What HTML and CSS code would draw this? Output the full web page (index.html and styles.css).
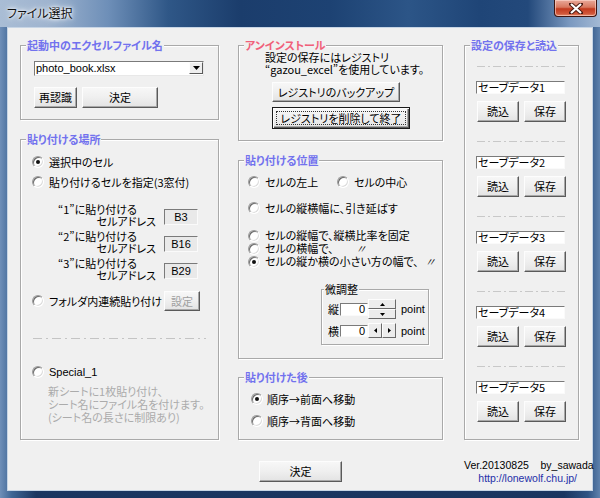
FILE: index.html
```html
<!DOCTYPE html>
<html lang="ja">
<head>
<meta charset="utf-8">
<title>ファイル選択</title>
<link rel="stylesheet" href="styles.css">
</head>
<body>
<div class="window">
  <div class="titlebar">
    <span class="title">ファイル選択</span>
    <div class="close">
      <svg width="14" height="11" viewBox="0 0 14 11"><path d="M2 1 L12 10 M12 1 L2 10" stroke="#4a1a12" stroke-width="4" stroke-linecap="square"/><path d="M2 1 L12 10 M12 1 L2 10" stroke="#fff" stroke-width="2.2"/></svg>
    </div>
  </div>
  <div class="client">
    <div class="col col-left">
      <section class="group g-file">
        <div class="gtitle">起動中のエクセルファイル名</div>
        <div class="combo">
          <span class="combo-text">photo_book.xlsx</span>
          <span class="combo-btn"><svg width="7" height="4" viewBox="0 0 7 4"><path d="M0 0 H7 L3.5 4 Z" fill="#000"/></svg></span>
        </div>
        <div class="btnrow">
          <div class="btn b-rerec">再認識</div>
          <div class="btn b-ok1">決定</div>
        </div>
      </section>
      <section class="group g-place">
        <div class="gtitle">貼り付ける場所</div>
        <div class="radio-row r-first"><span class="radio checked"></span><span>選択中のセル</span></div>
        <div class="radio-row r-second"><span class="radio"></span><span>貼り付けるセルを指定(3窓付)</span></div>
        <div class="addr a-first">
          <div class="addr-label"><div>“1”に貼り付ける</div><div class="al2">セルアドレス</div></div>
          <div class="addr-box">B3</div>
        </div>
        <div class="addr">
          <div class="addr-label"><div>“2”に貼り付ける</div><div class="al2">セルアドレス</div></div>
          <div class="addr-box">B16</div>
        </div>
        <div class="addr">
          <div class="addr-label"><div>“3”に貼り付ける</div><div class="al2">セルアドレス</div></div>
          <div class="addr-box">B29</div>
        </div>
        <div class="folder-row">
          <div class="radio-row"><span class="radio"></span><span>フォルダ内連続貼り付け</span></div>
          <div class="btn disabled b-set">設定</div>
        </div>
        <div class="dash dash-left"></div>
        <div class="radio-row r-special"><span class="radio"></span><span class="latin">Special_1</span></div>
        <div class="desc">新シートに1枚貼り付け、<br>シート名にファイル名を付けます。<br>(シート名の長さに制限あり)</div>
      </section>
    </div>

    <div class="col col-mid">
      <section class="group g-uninst">
        <div class="gtitle pink">アンインストール</div>
        <div class="uninst-text">設定の保存にはレジストリ<br>“gazou_excel”を使用しています。</div>
        <div class="btn b-backup">レジストリのバックアップ</div>
        <div class="btn focused b-delete"><span class="focus-rect">レジストリを削除して終了</span></div>
      </section>
      <section class="group g-pos">
        <div class="gtitle">貼り付ける位置</div>
        <div class="pos-row1">
          <div class="radio-row pr-a"><span class="radio"></span><span>セルの左上</span></div>
          <div class="radio-row"><span class="radio"></span><span>セルの中心</span></div>
        </div>
        <div class="radio-row pos-row2"><span class="radio"></span><span>セルの縦横幅に、引き延ばす</span></div>
        <div class="radio-row pos-row3 tight"><span class="radio"></span><span>セルの縦幅で、縦横比率を固定</span></div>
        <div class="radio-row pos-row tight"><span class="radio"></span><span>セルの横幅で、</span><span class="ditto d1">〃</span></div>
        <div class="radio-row pos-row tight"><span class="radio checked"></span><span>セルの縦か横の小さい方の幅で、</span><span class="ditto d2">〃</span></div>
        <section class="group g-fine">
          <div class="gtitle plain">微調整</div>
          <div class="fine-row fr1">
            <span class="fine-lbl">縦</span>
            <span class="num">0</span>
            <span class="spin-v">
              <span class="sbtn"><svg width="5" height="3" viewBox="0 0 5 3"><path d="M0 3 H5 L2.5 0 Z" fill="#000"/></svg></span>
              <span class="sbtn"><svg width="5" height="3" viewBox="0 0 5 3"><path d="M0 0 H5 L2.5 3 Z" fill="#000"/></svg></span>
            </span>
            <span class="latin pt">point</span>
          </div>
          <div class="fine-row fr2">
            <span class="fine-lbl">横</span>
            <span class="num">0</span>
            <span class="spin-h">
              <span class="sbtn"><svg width="3" height="5" viewBox="0 0 3 5"><path d="M3 0 V5 L0 2.5 Z" fill="#000"/></svg></span>
              <span class="sbtn"><svg width="3" height="5" viewBox="0 0 3 5"><path d="M0 0 V5 L3 2.5 Z" fill="#000"/></svg></span>
            </span>
            <span class="latin pt">point</span>
          </div>
        </section>
      </section>
      <section class="group g-after">
        <div class="gtitle">貼り付けた後</div>
        <div class="radio-row af1"><span class="radio checked"></span><span>順序→前面へ移動</span></div>
        <div class="radio-row af2"><span class="radio"></span><span>順序→背面へ移動</span></div>
      </section>
      <div class="btn b-ok2">決定</div>
    </div>

    <div class="col col-right">
      <section class="group g-save">
        <div class="gtitle">設定の保存と読込</div>
        <div class="dash dash-right first"></div>
        <div class="tbox">セーブデータ1</div>
        <div class="btnrow2"><div class="btn sbt">読込</div><div class="btn sbt">保存</div></div>
        <div class="dash dash-right"></div>
        <div class="tbox">セーブデータ2</div>
        <div class="btnrow2"><div class="btn sbt">読込</div><div class="btn sbt">保存</div></div>
        <div class="dash dash-right"></div>
        <div class="tbox">セーブデータ3</div>
        <div class="btnrow2"><div class="btn sbt">読込</div><div class="btn sbt">保存</div></div>
        <div class="dash dash-right"></div>
        <div class="tbox">セーブデータ4</div>
        <div class="btnrow2"><div class="btn sbt">読込</div><div class="btn sbt">保存</div></div>
        <div class="dash dash-right"></div>
        <div class="tbox">セーブデータ5</div>
        <div class="btnrow2"><div class="btn sbt">読込</div><div class="btn sbt">保存</div></div>
      </section>
      <div class="version">
        <div>Ver.20130825&nbsp;&nbsp;&nbsp;&nbsp;by_sawada</div>
        <div class="link">http://lonewolf.chu.jp/</div>
      </div>
    </div>
  </div>
</div>
</body>
</html>
```

FILE: styles.css
```css
* { box-sizing: border-box; }

html, body { margin: 0; padding: 0; }

body {
  font-family: "Noto Sans CJK JP", "Noto Sans", sans-serif;
  font-size: 11px;
  color: #000;
  font-feature-settings: "palt";
  background: #1c3a64;
}

.window {
  width: 600px;
  height: 498px;
  padding: 0 7px 7px;
  display: flex;
  flex-direction: column;
  background:
    linear-gradient(90deg, #6f8fb8 0%, #3e6594 2%, rgba(40,75,120,0) 6%, rgba(40,75,120,0) 94%, #2f5484 98%, #5f82ad 100%),
    linear-gradient(180deg, #2d5283 0%, #3a6190 40%, #2a4c7a 80%, #1a3560 100%);
}

.titlebar {
  height: 27px;
  margin: 0 -7px;
  padding: 0 7px;
  display: flex;
  justify-content: space-between;
  align-items: flex-start;
  background: linear-gradient(90deg, #a9bdd5 0%, #9fb4cf 8%, #6e8fb8 18%, #2f5787 28%, #1b3d6c 40%, #1d4273 55%, #2c5587 68%, #1f4577 80%, #23497b 88%, #7b99c0 95%, #a3b9d4 100%);
}

.title {
  margin-top: 5px;
  line-height: 16px;
  font-size: 12px;
  color: #111;
  text-shadow: 0 0 5px #fff, 0 0 3px #fff, 0 0 8px #e8f0fa;
}

.close {
  width: 43px;
  height: 17px;
  margin-right: -4px;
  border: 1px solid #3d1410;
  border-top: none;
  border-radius: 0 0 4px 4px;
  background: linear-gradient(180deg, #e9a99a 0%, #d8785f 45%, #c23a1e 55%, #d0573a 85%, #e38a6a 100%);
  box-shadow: inset 0 0 0 1px rgba(255,220,210,0.6);
  display: flex;
  align-items: center;
  justify-content: center;
}

.client {
  flex: 1;
  border: 1px solid #c7d5e5;
  background: #f0f0f0;
  display: flex;
  padding-left: 12px;
}

.col { display: flex; flex-direction: column; align-items: flex-start; }
.col-left { width: 199px; }
.col-mid { width: 205px; margin-left: 19px; }
.col-right { width: 115px; margin-left: 21px; }

/* group boxes */
.group {
  border: 1px solid #a9a9a9;
  box-shadow: 1px 1px 0 #fff, inset 1px 1px 0 #fff;
  display: flex;
  flex-direction: column;
  align-items: flex-start;
  width: 100%;
}

.gtitle {
  margin: -7px 0 -6px 5px;
  padding: 0 1px;
  height: 13px;
  line-height: 13px;
  background: #f0f0f0;
  color: #7272ee;
  font-weight: bold;
  white-space: nowrap;
}
.gtitle.pink { color: #f0607a; }
.gtitle.plain { color: #000; font-weight: normal; margin-left: 2px; }

.latin { font-family: "Liberation Sans", sans-serif; font-size: 11px; }

/* buttons */
.btn {
  display: flex;
  align-items: center;
  justify-content: center;
  height: 21px;
  border: 1px solid;
  border-color: #fdfdfd #5a5a5a #5a5a5a #fdfdfd;
  box-shadow: inset -1px -1px 0 #a8a8a8;
  background: linear-gradient(180deg, #f7f7f7 0%, #efefef 50%, #e3e3e3 100%);
  line-height: 13px;
  white-space: nowrap;
}
.btn.disabled { color: #a0a0a0; }

/* radio */
.radio-row {
  display: flex;
  align-items: center;
  height: 14px;
  line-height: 14px;
  white-space: nowrap;
}
.radio {
  width: 12px;
  height: 12px;
  border-radius: 50%;
  border: 1px solid;
  border-color: #9a9a9a #ffffff #ffffff #9a9a9a;
  background: #fff;
  box-shadow: inset 1px 1px 0 #6a6a6a, inset -1px -1px 0 #dcdcdc;
  margin-right: 5px;
  flex: none;
  display: flex;
  align-items: center;
  justify-content: center;
}
.radio.checked::after {
  content: "";
  width: 4px;
  height: 4px;
  border-radius: 50%;
  background: #111;
}

/* group 1 */
.g-file { margin-top: 17px; height: 75px; }
.combo {
  margin: 15px 0 0 13px;
  width: 170px;
  height: 15px;
  display: flex;
  justify-content: space-between;
  background: #fff;
  border: 1px solid;
  border-color: #7a7a7a #e8e8e8 #e8e8e8 #7a7a7a;
}
.combo-text {
  font-family: "Liberation Sans", sans-serif;
  font-size: 11px;
  line-height: 13px;
  padding-left: 1px;
}
.combo-btn {
  width: 14px;
  height: 12px;
  margin-right: 0;
  border: 1px solid;
  border-color: #fdfdfd #5a5a5a #5a5a5a #fdfdfd;
  background: #eeeeee;
  display: flex;
  align-items: center;
  justify-content: center;
}
.btnrow { margin: 11px 0 0 13px; display: flex; gap: 5px; }
.b-rerec { width: 43px; }
.b-ok1 { width: 76px; }

/* group 2 */
.g-place { margin-top: 19px; height: 301px; }
.g-place .radio-row { margin-left: 11px; }
.r-first { margin-top: 15px; }
.r-second { margin-top: 6px; }
.addr {
  display: flex;
  align-items: flex-end;
  margin: 3px 0 0 37px;
  height: 24px;
}
.addr.a-first { margin-top: 14px; }
.addr-label { width: 98px; line-height: 12px; white-space: nowrap; }
.addr-label .al2 { text-align: right; }
.addr-box {
  margin: 0 0 2px 8px;
  width: 34px;
  height: 16px;
  border: 1px solid;
  border-color: #7a7a7a #fafafa #fafafa #7a7a7a;
  background: #e9e9e9;
  font-family: "Liberation Sans", sans-serif;
  font-size: 11px;
  line-height: 14px;
  text-align: center;
}
.folder-row {
  align-self: stretch;
  display: flex;
  align-items: center;
  margin-top: 10px;
  height: 20px;
}
.b-set { width: 36px; height: 20px; margin-left: auto; margin-right: 18px; }
.dash { height: 1px; }
.dash-left {
  margin: 27px 0 0 12px;
  width: 173px;
  background: repeating-linear-gradient(90deg, #c4c4c4 0 9px, transparent 9px 13px, #c4c4c4 13px 15px, transparent 15px 19px);
}
.r-special { margin-top: 26px; }
.desc {
  margin: 6px 0 0 27px;
  line-height: 13px;
  color: #ababab;
  white-space: nowrap;
}

/* group 3 */
.g-uninst { margin-top: 17px; height: 96px; }
.uninst-text { margin: 5px 0 0 26px; line-height: 12px; white-space: nowrap; }
.b-backup { margin: 7px 0 0 33px; width: 128px; height: 20px; }
.b-delete {
  margin: 5px 0 0 33px;
  width: 138px;
  height: 22px;
  border: 1px solid #1a1a1a;
  box-shadow: inset 1px 1px 0 #fdfdfd, inset -1px -1px 0 #5a5a5a, inset -2px -2px 0 #a8a8a8;
  padding: 3px;
}
.focus-rect {
  flex: 1;
  align-self: stretch;
  display: flex;
  align-items: center;
  justify-content: center;
  border: 1px dotted #333;
}

/* group 4 */
.g-pos { margin-top: 19px; height: 199px; }
.g-pos > .radio-row { margin-left: 9px; }
.pos-row1 { display: flex; margin: 14px 0 0 9px; }
.pr-a { width: 89px; }
.pos-row2 { margin-top: 12px; }
.tight { height: 13px; line-height: 13px; }
.pos-row3 { margin-top: 14px; }
.ditto { font-style: italic; }
.d1 { margin-left: 22px; }
.d2 { margin-left: 6px; }

.g-fine { margin: 21px 0 0 82px; width: 108px; height: 56px; }
.fine-row { display: flex; align-items: center; white-space: nowrap; }
.fr1 { margin: 9px 0 0 6px; height: 20px; }
.fr2 { margin: 4px 0 0 6px; height: 15px; }
.fine-lbl { width: 12px; }
.num {
  width: 28px;
  height: 13px;
  border: 1px solid;
  border-color: #7a7a7a #fafafa #fafafa #7a7a7a;
  background: #fff;
  text-align: right;
  padding-right: 2px;
  font-family: "Liberation Sans", sans-serif;
  font-size: 11px;
  line-height: 11px;
}
.fr2 .num { height: 12px; }
.spin-v { display: flex; flex-direction: column; width: 28px; height: 20px; }
.spin-v .sbtn { height: 10px; }
.spin-h { display: flex; width: 28px; height: 15px; }
.spin-h .sbtn { width: 14px; }
.sbtn {
  flex: 1;
  display: flex;
  align-items: center;
  justify-content: center;
  border: 1px solid;
  border-color: #fdfdfd #6a6a6a #6a6a6a #fdfdfd;
  background: #ececec;
}
.pt { margin-left: 5px; }

/* group 5 */
.g-after { margin-top: 18px; height: 63px; }
.g-after .radio-row { margin-left: 12px; }
.g-after .radio { margin-right: 4px; }
.af1 { margin-top: 14px; }
.af2 { margin-top: 8px; }
.b-ok2 { margin: 21px 0 0 21px; width: 83px; }

/* group 6 */
.g-save { margin-top: 17px; height: 395px; }
.dash-right {
  margin: 19px 0 0 12px;
  width: 89px;
  background: repeating-linear-gradient(90deg, #c8c8c8 0 8px, transparent 8px 11px, #c8c8c8 11px 13px, transparent 13px 16px);
}
.dash-right.first { margin-top: 20px; }
.tbox {
  margin: 14px 0 0 11px;
  width: 89px;
  height: 13px;
  border: 1px solid;
  border-color: #7a7a7a #fafafa #fafafa #7a7a7a;
  background: #fff;
  line-height: 11px;
  padding-left: 1px;
  white-space: nowrap;
}
.btnrow2 { display: flex; gap: 5px; margin: 7px 0 0 12px; }
.sbt { width: 42px; }

.version {
  margin-top: 19px;
  align-self: stretch;
  padding-right: 2px;
  text-align: right;
  font-family: "Liberation Sans", sans-serif;
  font-size: 10.5px;
  line-height: 13px;
  white-space: nowrap;
}
.version .link { color: #1f2fa8; }
```
